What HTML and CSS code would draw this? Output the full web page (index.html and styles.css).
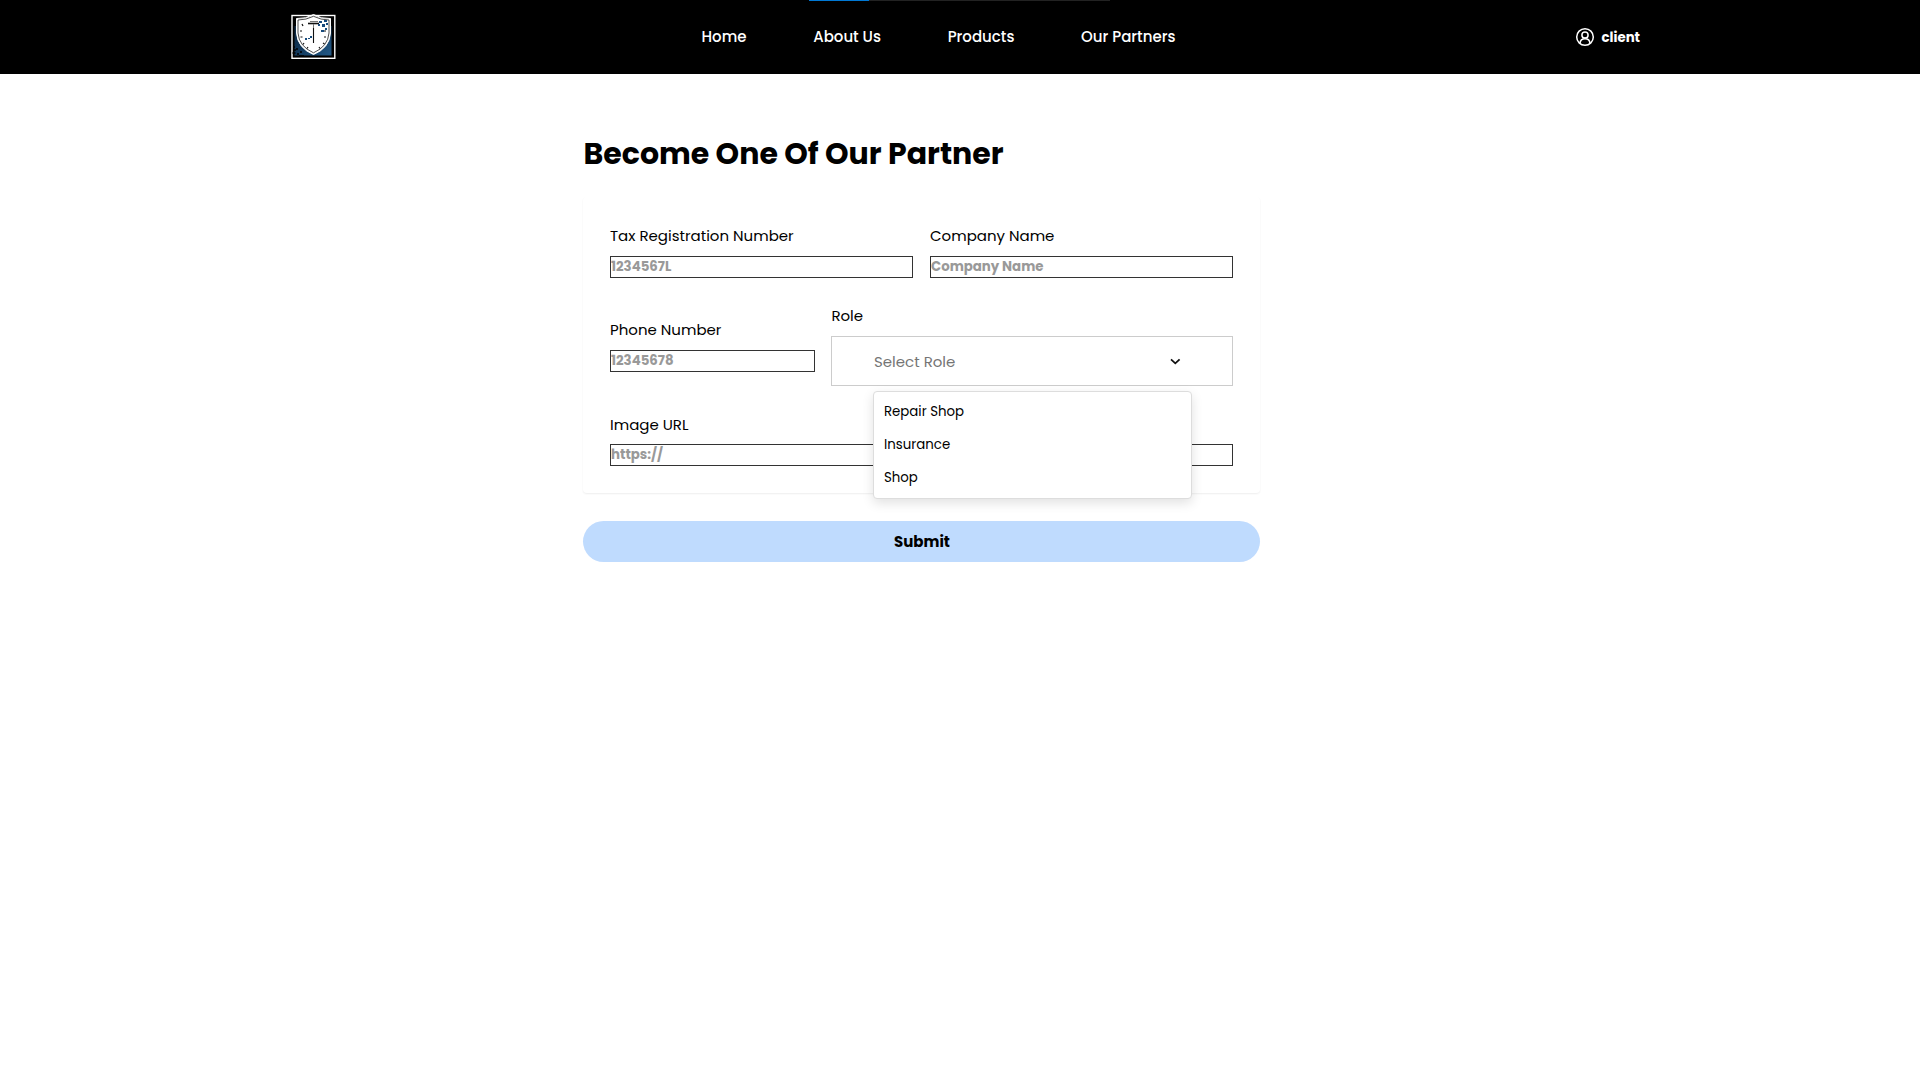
FILE: index.html
```html
<!DOCTYPE html>
<html lang="en">
<head>
<meta charset="utf-8">
<title>Become One Of Our Partner</title>
<link rel="stylesheet" href="styles.css">
</head>
<body>
<header class="topbar">
  <div class="progress"><div class="progress-value"></div></div>
  <svg class="logo" viewBox="0 0 46 48" aria-label="Logo">
    <defs><linearGradient id="sky" x1="0" y1="0" x2="1" y2="1"><stop offset="0" stop-color="#0a2036"/><stop offset=".5" stop-color="#12395c"/><stop offset="1" stop-color="#235a88"/></linearGradient></defs>
    <rect x="2" y="2.500" width="42.800" height="42.800" fill="#000" stroke="#fff" stroke-width="1.400"/>
    <rect x="4.500" y="6" width="37" height="36.500" fill="url(#sky)"/>
    <path d="M4 6h38v7H4z" fill="#000"/>
    <path d="M23.500 1.500 Q31 6 40.500 5.500 V20 Q39.500 35 23.500 41.500 Q7.500 35 6.500 20 V5.500 Q16 6 23.500 1.500Z" fill="#fff" stroke="#fff"/>
    <path d="M23.500 3.300 Q31 7 39 7 V20 Q38 33.500 23.500 39.800 Q9 33.500 8 20 V7 Q16 7 23.500 3.300Z" fill="#fff" stroke="#000" stroke-width=".7"/>
    <path d="M18 10.500h11" stroke="#111" stroke-width="1.600"/><path d="M20 8.500h8M23.500 11v7" stroke="#777"/><path d="M23.500 15v15" stroke="#111" stroke-width="1.100"/>
    <path d="M12 11l1 2M10 18h2M10.500 24h2M14 30l-1 1.500M18 34l-1 1.500M29 34l1 1.500M33 30l1.500 1M36 24h-2M36 18h-2" stroke="#111" stroke-width="1.200"/>
    <path d="M29 8h3v2h-3zM34 7h3v2h-3zM32 11h3v3h-3zM36 10h2v2h-2zM28 11h2v2h-2zM31 17h3v2h-3zM20 23h2v2h-2zM15 25h2v2h-2zM18 25h2v1h-2zM35 15h2v2h-2z" fill="#174a7c"/>
    <path d="M3 34h2M4 37h2M2.500 40h3M7 41h2M10 39h2M12 43h2M6 36h2M9 43h3M42 10h2" stroke="#000" stroke-width="1.300"/>
  </svg>
  <nav class="nav"><a>Home</a><a>About Us</a><a>Products</a><a>Our Partners</a></nav>
  <div class="account">
    <svg class="avatar" viewBox="0 0 20 20" fill="none" stroke="#fff" stroke-width="1.500"><circle cx="10" cy="10" r="8.300"/><circle cx="10" cy="8" r="3.100"/><path d="M5 16.300c.2-2.900 2-4.600 5-4.600s4.800 1.700 5 4.600"/></svg>
    <span class="account-name">client</span>
  </div>
</header>
<main class="content">
  <h1 class="title">Become One Of Our Partner</h1>
  <form class="panel">
    <div class="row">
      <div class="field"><label>Tax Registration Number</label><div class="input">1234567L</div></div>
      <div class="field"><label>Company Name</label><div class="input">Company Name</div></div>
    </div>
    <div class="row row-role">
      <div class="field"><label>Phone Number</label><div class="input">12345678</div></div>
      <div class="field"><label>Role</label>
        <div class="select"><span>Select Role</span>
          <svg class="chevron" viewBox="0 0 12 8"><path d="M2 2.300 6.300 6.300 10.600 2.300" fill="none" stroke="#111" stroke-width="1.800"/></svg>
          <div class="menu"><div class="option">Repair Shop</div><div class="option">Insurance</div><div class="option">Shop</div></div>
        </div>
      </div>
    </div>
    <div class="field field-url"><label>Image URL</label><div class="input">https://</div></div>
  </form>
  <button class="submit">Submit</button>
</main>
</body>
</html>
```
FILE: styles.css
```css
* { box-sizing: border-box; }
body { margin: 0; background: #fff; color: #000; font-family: Poppins, Inter, sans-serif; font-size: 15px; }

.topbar { position: relative; height: 74px; padding: 0 280px 0 290px; background: #000; color: #fff; display: grid; grid-template-columns: 411.5px 1fr 65px; align-items: center; }
.progress { position: absolute; left: 809px; top: 0; width: 301px; height: 1px; background: #222; }
.progress-value { width: 60px; height: 1px; background: #0078d4; }
.logo { width: 46px; height: 48px; }
.nav { display: flex; gap: 66.7px; font-size: 15px; font-weight: 500; line-height: 24px; }
.account { display: flex; align-items: center; gap: 6.5px; font-weight: 700; font-size: 13.333px; line-height: 23px; }
.avatar { flex: none; width: 20px; height: 20px; }

.content { width: 677px; margin-left: 583px; padding-top: 58px; }
.title { margin: 0; padding-left: .5px; font-size: 30px; line-height: 44px; font-weight: 700; white-space: nowrap; }
.panel { margin-top: 21px; padding: 27px; display: flex; flex-direction: column; gap: 26px; border-radius: 4px; box-shadow: 0 1px 2px rgba(0,0,0,.07); }
.row { display: grid; grid-template-columns: 303px 303px; gap: 17px; align-items: center; }
.row-role { grid-template-columns: 205px 401.6px; gap: 16.4px; }
label { display: block; line-height: 24px; margin-bottom: 8px; white-space: nowrap; }
.field-url label { padding-top: 1px; margin-bottom: 7px; }
.input { height: 22px; border: 1px solid #333; line-height: 19px; font-size: 13.333px; font-weight: 700; color: #999; }

.select { position: relative; height: 50px; border: 1px solid #ccc; padding: 0 51px 0 41.6px; display: flex; align-items: center; justify-content: space-between; color: #757575; }
.chevron { width: 12px; height: 8px; }
.menu { position: absolute; left: 41px; top: 54px; width: 319px; height: 108px; padding: 3px 9.6px; background: #fff; border: 1px solid #ddd; border-radius: 4px; box-shadow: 0 4px 12px rgba(0,0,0,.12); color: #000; font-size: 13.333px; }
.option { height: 33px; line-height: 33px; }

.submit { display: block; width: 100%; height: 41px; margin-top: 28px; padding: 0 0 0 1px; border: 0; border-radius: 21px; background: #bfdbfe; font: 700 15px/24px Poppins, Inter, sans-serif; color: #000; }
```
